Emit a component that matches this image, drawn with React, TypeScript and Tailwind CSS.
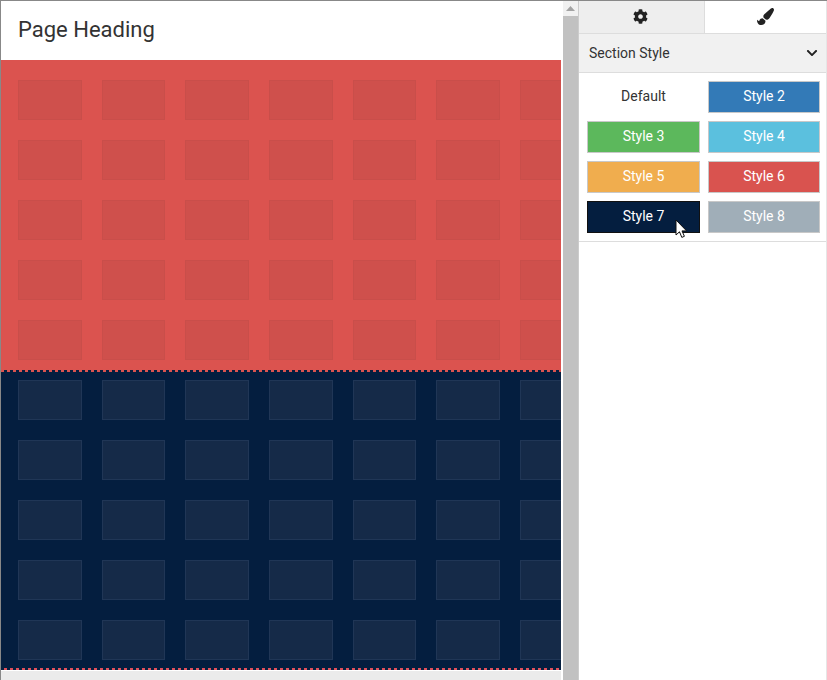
import { FaCog, FaPaintBrush, FaChevronDown } from "react-icons/fa";

const cards = Array.from({ length: 35 });

const styles = [
  { label: "Default", cls: "bg-white text-[#333] border-white" },
  { label: "Style 2", cls: "bg-[#337ab7] text-white border-[#c8c8c8]" },
  { label: "Style 3", cls: "bg-[#5cb85c] text-white border-[#c8c8c8]" },
  { label: "Style 4", cls: "bg-[#5bc0de] text-white border-[#c8c8c8]" },
  { label: "Style 5", cls: "bg-[#f0ad4e] text-white border-[#c8c8c8]" },
  { label: "Style 6", cls: "bg-[#d9534f] text-white border-[#c8c8c8]" },
  { label: "Style 7", cls: "bg-[#041e3f] text-white border-[#111]" },
  { label: "Style 8", cls: "bg-[#a0aeb8] text-white border-[#c8c8c8]" },
];

export default function App() {
  return (
    <div className="flex h-[680px] w-[827px] overflow-hidden border-l border-t border-[#888] bg-white font-['Roboto',sans-serif]">
      <div className="flex w-[560px] shrink-0 flex-col overflow-hidden">
        <div className="flex h-[59px] shrink-0 items-center bg-white pb-[2px] pl-[17px] text-[22px] text-[#333]">Page Heading</div>
        <div className="h-[310px] shrink-0 overflow-hidden bg-[#db534f] pl-[17px] pt-[20px]">
          <div className="grid grid-cols-[repeat(7,63.67px)] auto-rows-[40px] gap-x-[20px] gap-y-[20px]">
            {cards.map((_, i) => (
              <div key={i} className="border border-[#c94e4a] bg-[#cf504c]" />
            ))}
          </div>
        </div>
        <div className="h-[2px] shrink-0 bg-[repeating-linear-gradient(90deg,#db534f_0,#db534f_3px,#041e3f_3px,#041e3f_6px)]" />
        <div className="h-[296px] shrink-0 overflow-hidden bg-[#041e3f] pl-[17px] pt-[8px]">
          <div className="grid grid-cols-[repeat(7,63.67px)] auto-rows-[40px] gap-x-[20px] gap-y-[20px]">
            {cards.map((_, i) => (
              <div key={i} className="border border-[#203656] bg-[#152a48]" />
            ))}
          </div>
        </div>
        <div className="h-[2px] shrink-0 bg-[repeating-linear-gradient(90deg,#041e3f_0,#041e3f_3px,#e0505a_3px,#e0505a_6px)]" />
        <div className="h-[1px] shrink-0 bg-white" />
        <div className="flex-1 bg-[#ebebeb]" />
      </div>
      <div className="w-[2px] shrink-0 bg-white" />
      <div className="flex w-[15px] shrink-0 flex-col bg-[#f1f1f1]">
        <div className="flex h-[15px] shrink-0 items-center justify-center">
          <svg width="9" height="5" viewBox="0 0 9 5"><path d="M4.5 0L9 5H0z" fill="#a3a3a3" /></svg>
        </div>
        <div className="flex-1 bg-[#c1c1c1]" />
      </div>
      <div className="relative flex min-w-0 flex-1 flex-col border-l border-r border-l-[#ccc] border-r-[#e6e6e6] bg-white text-[14px] text-[#333]">
        <div className="flex h-[33px] shrink-0 border-b border-[#ddd]">
          <div className="flex w-[126px] items-center justify-center border-r border-[#ddd] bg-[#eee] pb-[2px] pr-[2px]">
            <FaCog className="text-[15px] text-[#222]" />
          </div>
          <div className="flex flex-1 items-center justify-center bg-white pb-[2px]">
            <FaPaintBrush className="text-[17px] text-[#222]" />
          </div>
        </div>
        <div className="flex h-[39px] shrink-0 items-center justify-between border-b border-[#ddd] bg-[#f1f1f1] pl-[10px] pr-[8px]">
          <span>Section Style</span>
          <FaChevronDown className="text-[12px] text-[#222]" />
        </div>
        <div className="grid shrink-0 grid-cols-[113px_112px] auto-rows-[32px] gap-x-[8px] gap-y-[8px] border-b border-[#ddd] pb-[8px] pl-[8px] pt-[8px]">
          {styles.map((s) => (
            <div key={s.label} className={`flex items-center justify-center border pb-[1px] text-[14px] ${s.cls}`}>
              {s.label}
            </div>
          ))}
        </div>
        <svg className="absolute left-[96px] top-[218px]" width="13" height="20" viewBox="0 0 13 20">
          <path d="M1 1v15l3.5-3.2 2.3 5.6 2.6-1.1-2.4-5.4h4.6z" fill="#fff" stroke="#111" strokeWidth="1" />
        </svg>
      </div>
    </div>
  );
}
